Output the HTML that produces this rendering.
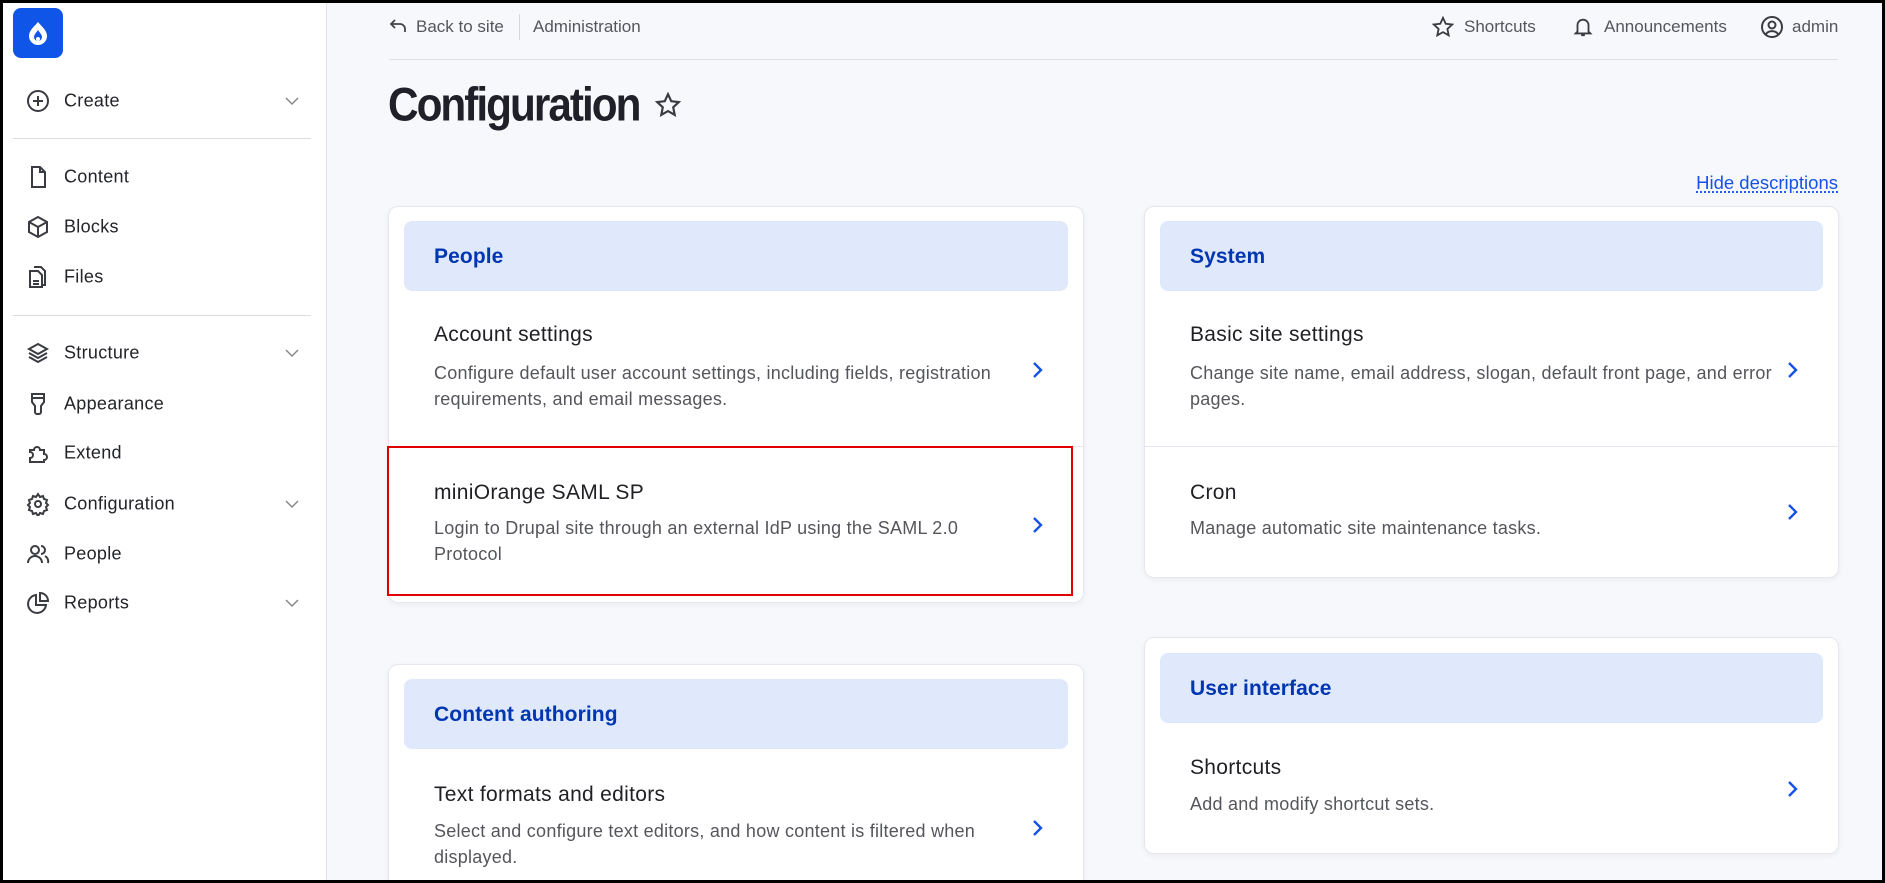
<!DOCTYPE html>
<html><head><meta charset="utf-8">
<style>
*{margin:0;padding:0;box-sizing:border-box}
html,body{width:1885px;height:883px;overflow:hidden}
body{font-family:"Liberation Sans",Arial,sans-serif;background:#f7f8fc;position:relative;color:#222330}
.frame{position:absolute;inset:0;border:3px solid #000;z-index:50;pointer-events:none}
.side{position:absolute;left:0;top:0;width:327px;height:883px;background:#fff;border-right:1px solid #e3e4ea}
.logo{position:absolute;left:13px;top:8px;width:50px;height:50px;background:#0f56e8;border-radius:8px}
.nav{position:absolute;left:64px;font-size:18px;letter-spacing:0.3px;color:#232429;transform:translateY(-50%)}
.ic{position:absolute;left:26px;width:24px;height:24px;transform:translateY(-50%)}
.chev{position:absolute;left:282px;width:20px;height:20px;transform:translateY(-50%)}
.hr{position:absolute;left:13px;width:298px;height:1px;background:#dcdde3}
.t{position:absolute;white-space:nowrap;transform:translateY(-50%)}
.top{font-size:17px;color:#55565b}
.card{position:absolute;background:#fff;border:1px solid #e6e7ee;border-radius:10px;box-shadow:0 2px 6px rgba(0,0,0,.05)}
.hd{position:absolute;background:#e0e8fb;border-radius:8px}
.h{font-size:21px;font-weight:bold;color:#0036b1;letter-spacing:0.1px}
.it{font-size:21px;letter-spacing:0.3px;color:#1f1f24}
.ds{font-size:18px;letter-spacing:0.25px;color:#55565b;line-height:26px;transform:none}
.arr{position:absolute;width:14px;height:20px;transform:translateY(-50%)}
</style></head><body>
<div class="side">
 <div class="logo"><svg width="50" height="50" viewBox="0 0 50 50"><path d="M25 14c3 4 9 8 9 14a9 9 0 0 1-18 0c0-6 6-10 9-14z" fill="#fff"/><path d="M25 22c1.5 2.5 4 4.5 4 7a4 4 0 0 1-8 0c0-2.5 2.5-4.5 4-7z" fill="#0f56e8"/><circle cx="25" cy="31" r="2" fill="#fff"/></svg></div>
 <svg class="ic" style="top:101px" viewBox="0 0 24 24" fill="none" stroke="#3b3c42" stroke-width="2"><circle cx="12" cy="12" r="10"/><path d="M12 7v10M7 12h10"/></svg>
 <span class="nav" style="top:101px">Create</span>
 <svg class="chev" style="top:101px" viewBox="0 0 20 20" fill="none" stroke="#888" stroke-width="1.5"><path d="M4 7l6 6 6-6"/></svg>
 <div class="hr" style="top:138px"></div>
 <svg class="ic" style="top:177px" viewBox="0 0 24 24" fill="none" stroke="#3b3c42" stroke-width="2"><path d="M6 2h8l5 5v15H6z M14 2v5h5"/></svg>
 <span class="nav" style="top:177px">Content</span>
 <svg class="ic" style="top:227px" viewBox="0 0 24 24" fill="none" stroke="#3b3c42" stroke-width="2"><path d="M12 2l9 5v10l-9 5-9-5V7z M3 7l9 5 9-5 M12 12v10"/></svg>
 <span class="nav" style="top:227px">Blocks</span>
 <svg class="ic" style="top:277px" viewBox="0 0 24 24" fill="none" stroke="#3b3c42" stroke-width="2"><path d="M8 2h7l4 4v14h-4 M4 6h8l4 4v12H4z M7 16h6M7 19h6"/></svg>
 <span class="nav" style="top:277px">Files</span>
 <div class="hr" style="top:315px"></div>
 <svg class="ic" style="top:353px" viewBox="0 0 24 24" fill="none" stroke="#3b3c42" stroke-width="2"><path d="M12 3l9 5-9 5-9-5z M3 12l9 5 9-5 M3 16l9 5 9-5"/></svg>
 <span class="nav" style="top:353px">Structure</span>
 <svg class="chev" style="top:353px" viewBox="0 0 20 20" fill="none" stroke="#888" stroke-width="1.5"><path d="M4 7l6 6 6-6"/></svg>
 <svg class="ic" style="top:404px" viewBox="0 0 24 24" fill="none" stroke="#3b3c42" stroke-width="2"><path d="M6 2h12v8l-3 4v6a2 2 0 0 1-2 2h-2a2 2 0 0 1-2-2v-6L6 10z M6 6h12"/></svg>
 <span class="nav" style="top:404px">Appearance</span>
 <svg class="ic" style="top:453px" viewBox="0 0 24 24" fill="none" stroke="#3b3c42" stroke-width="2"><path d="M4 9h4a3 3 0 1 1 6 0h4v4a3 3 0 1 1 0 6v2H4v-4a3 3 0 1 0 0-6z"/></svg>
 <span class="nav" style="top:453px">Extend</span>
 <svg class="ic" style="top:504px" viewBox="0 0 24 24" fill="none" stroke="#3b3c42" stroke-width="2"><circle cx="12" cy="12" r="3"/><path d="M12 2l2 3 3-1 1 3 3 1-1 3 2 2-2 2 1 3-3 1-1 3-3-1-2 3-2-3-3 1-1-3-3-1 1-3-2-2 2-2-1-3 3-1 1-3 3 1z"/></svg>
 <span class="nav" style="top:504px">Configuration</span>
 <svg class="chev" style="top:504px" viewBox="0 0 20 20" fill="none" stroke="#888" stroke-width="1.5"><path d="M4 7l6 6 6-6"/></svg>
 <svg class="ic" style="top:554px" viewBox="0 0 24 24" fill="none" stroke="#3b3c42" stroke-width="2"><circle cx="9" cy="8" r="4"/><path d="M2 21a7 7 0 0 1 14 0 M15 4a4 4 0 0 1 0 8 M19 14a6 6 0 0 1 3 7"/></svg>
 <span class="nav" style="top:554px">People</span>
 <svg class="ic" style="top:603px" viewBox="0 0 24 24" fill="none" stroke="#3b3c42" stroke-width="2"><path d="M10 4a9 9 0 1 0 10 10H10z M14 2v8h8a8 8 0 0 0-8-8z"/></svg>
 <span class="nav" style="top:603px">Reports</span>
 <svg class="chev" style="top:603px" viewBox="0 0 20 20" fill="none" stroke="#888" stroke-width="1.5"><path d="M4 7l6 6 6-6"/></svg>
</div>

<svg style="position:absolute;left:388px;top:17px" width="20" height="20" viewBox="0 0 20 20" fill="none" stroke="#444" stroke-width="1.8"><path d="M7 3L3 7l4 4 M3 7h9a5 5 0 0 1 5 5v3"/></svg>
<span class="t top" style="left:416px;top:27px">Back to site</span>
<div style="position:absolute;left:519px;top:14px;width:1px;height:26px;background:#d5d6dc"></div>
<span class="t top" style="left:533px;top:27px">Administration</span>
<svg style="position:absolute;left:1432px;top:16px" width="22" height="22" viewBox="0 0 24 24" fill="none" stroke="#3b3c42" stroke-width="2"><path d="M12 2l3 6.5 7 .8-5.2 4.8 1.4 7L12 17.6 5.8 21.1l1.4-7L2 9.3l7-.8z"/></svg>
<span class="t top" style="left:1464px;top:27px">Shortcuts</span>
<svg style="position:absolute;left:1572px;top:15px" width="22" height="24" viewBox="0 0 24 24" fill="none" stroke="#3b3c42" stroke-width="2"><path d="M6 17V10a6 6 0 0 1 12 0v7l2 2H4z M10 21h4"/></svg>
<span class="t top" style="left:1604px;top:27px">Announcements</span>
<svg style="position:absolute;left:1760px;top:15px" width="24" height="24" viewBox="0 0 24 24" fill="none" stroke="#3b3c42" stroke-width="2"><circle cx="12" cy="12" r="10"/><circle cx="12" cy="10" r="3.5"/><path d="M6 19a7 6 0 0 1 12 0"/></svg>
<span class="t top" style="left:1792px;top:27px">admin</span>
<div style="position:absolute;left:389px;top:59px;width:1449px;height:1px;background:#dedfe5"></div>

<span class="t" style="left:388px;top:104px;font-size:47px;font-weight:bold;letter-spacing:-2.2px;color:#202128;transform:translateY(-50%) scaleX(0.9);transform-origin:left center">Configuration</span>
<svg style="position:absolute;left:655px;top:92px" width="26" height="26" viewBox="0 0 24 24" fill="none" stroke="#3b3c42" stroke-width="2"><path d="M12 2l3 6.5 7 .8-5.2 4.8 1.4 7L12 17.6 5.8 21.1l1.4-7L2 9.3l7-.8z"/></svg>
<span class="t" style="right:47px;top:183px;font-size:18.5px;color:#1652e8;text-decoration:underline dotted;text-underline-offset:3px">Hide descriptions</span>

<!-- People card -->
<div class="card" style="left:388px;top:206px;width:696px;height:397px"></div>
<div class="hd" style="left:404px;top:221px;width:664px;height:70px"></div>
<span class="t h" style="left:434px;top:257px">People</span>
<span class="t it" style="left:434px;top:335px">Account settings</span>
<div class="t ds" style="left:434px;top:360px">Configure default user account settings, including fields, registration<br>requirements, and email messages.</div>
<svg class="arr" style="left:1030px;top:370px" viewBox="0 0 14 20" fill="none" stroke="#1652e8" stroke-width="2.4"><path d="M4 3l7 7-7 7"/></svg>
<div style="position:absolute;left:389px;top:446px;width:694px;height:1px;background:#e6e7ee"></div>
<span class="t it" style="left:434px;top:493px">miniOrange SAML SP</span>
<div class="t ds" style="left:434px;top:515px">Login to Drupal site through an external IdP using the SAML 2.0<br>Protocol</div>
<svg class="arr" style="left:1030px;top:525px" viewBox="0 0 14 20" fill="none" stroke="#1652e8" stroke-width="2.4"><path d="M4 3l7 7-7 7"/></svg>
<div style="position:absolute;left:387px;top:446px;width:686px;height:150px;border:2px solid #e00000;z-index:5"></div>

<!-- Content authoring -->
<div class="card" style="left:388px;top:664px;width:696px;height:260px"></div>
<div class="hd" style="left:404px;top:679px;width:664px;height:70px"></div>
<span class="t h" style="left:434px;top:715px">Content authoring</span>
<span class="t it" style="left:434px;top:795px">Text formats and editors</span>
<div class="t ds" style="left:434px;top:818px">Select and configure text editors, and how content is filtered when<br>displayed.</div>
<svg class="arr" style="left:1030px;top:828px" viewBox="0 0 14 20" fill="none" stroke="#1652e8" stroke-width="2.4"><path d="M4 3l7 7-7 7"/></svg>

<!-- System -->
<div class="card" style="left:1144px;top:206px;width:695px;height:372px"></div>
<div class="hd" style="left:1160px;top:221px;width:663px;height:70px"></div>
<span class="t h" style="left:1190px;top:257px">System</span>
<span class="t it" style="left:1190px;top:335px">Basic site settings</span>
<div class="t ds" style="left:1190px;top:360px">Change site name, email address, slogan, default front page, and error<br>pages.</div>
<svg class="arr" style="left:1785px;top:370px" viewBox="0 0 14 20" fill="none" stroke="#1652e8" stroke-width="2.4"><path d="M4 3l7 7-7 7"/></svg>
<div style="position:absolute;left:1145px;top:446px;width:693px;height:1px;background:#e6e7ee"></div>
<span class="t it" style="left:1190px;top:493px">Cron</span>
<div class="t ds" style="left:1190px;top:515px">Manage automatic site maintenance tasks.</div>
<svg class="arr" style="left:1785px;top:512px" viewBox="0 0 14 20" fill="none" stroke="#1652e8" stroke-width="2.4"><path d="M4 3l7 7-7 7"/></svg>

<!-- User interface -->
<div class="card" style="left:1144px;top:637px;width:695px;height:217px"></div>
<div class="hd" style="left:1160px;top:653px;width:663px;height:70px"></div>
<span class="t h" style="left:1190px;top:689px">User interface</span>
<span class="t it" style="left:1190px;top:768px">Shortcuts</span>
<div class="t ds" style="left:1190px;top:791px">Add and modify shortcut sets.</div>
<svg class="arr" style="left:1785px;top:789px" viewBox="0 0 14 20" fill="none" stroke="#1652e8" stroke-width="2.4"><path d="M4 3l7 7-7 7"/></svg>

<div class="frame"></div>
</body></html>
